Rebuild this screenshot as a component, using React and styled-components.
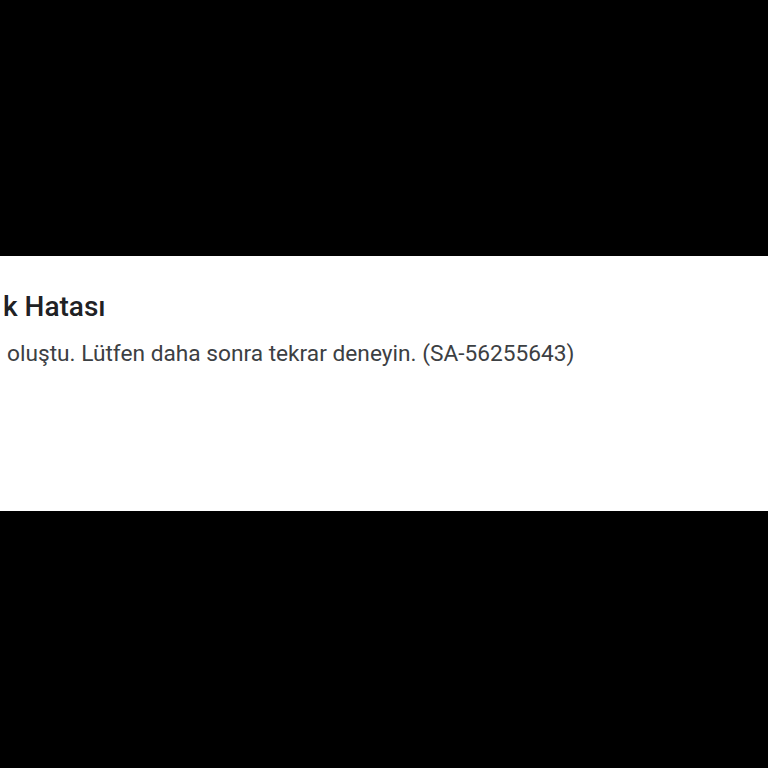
import styled, { createGlobalStyle } from 'styled-components';

const Global = createGlobalStyle`
  html, body {
    margin: 0;
    padding: 0;
    background: #000000;
  }
  body {
    font-family: Roboto, "Noto Sans", sans-serif;
  }
`;

const Screen = styled.div`
  width: 768px;
  height: 768px;
  box-sizing: border-box;
  padding-top: 256px;
  background: #000000;
  overflow: hidden;
`;

const Dialog = styled.div`
  height: 255px;
  background: #ffffff;
  box-sizing: border-box;
  padding: 34px 0 0 3px;
  display: flex;
  flex-flow: column nowrap;
  gap: 16px;
`;

const Title = styled.h2`
  margin: 0;
  font-size: 28px;
  font-weight: 500;
  line-height: 34px;
  color: #202124;
  white-space: nowrap;
`;

const Message = styled.p`
  margin: 0;
  padding-left: 4px;
  font-size: 22.7px;
  font-weight: 400;
  line-height: 28px;
  color: #3c4043;
  white-space: nowrap;
`;

const App = () => {
  return (
    <Screen>
      <Global />
      <Dialog>
        <Title>k Hatası</Title>
        <Message>oluştu. Lütfen daha sonra tekrar deneyin. (SA-56255643)</Message>
      </Dialog>
    </Screen>
  );
};

export default App;
